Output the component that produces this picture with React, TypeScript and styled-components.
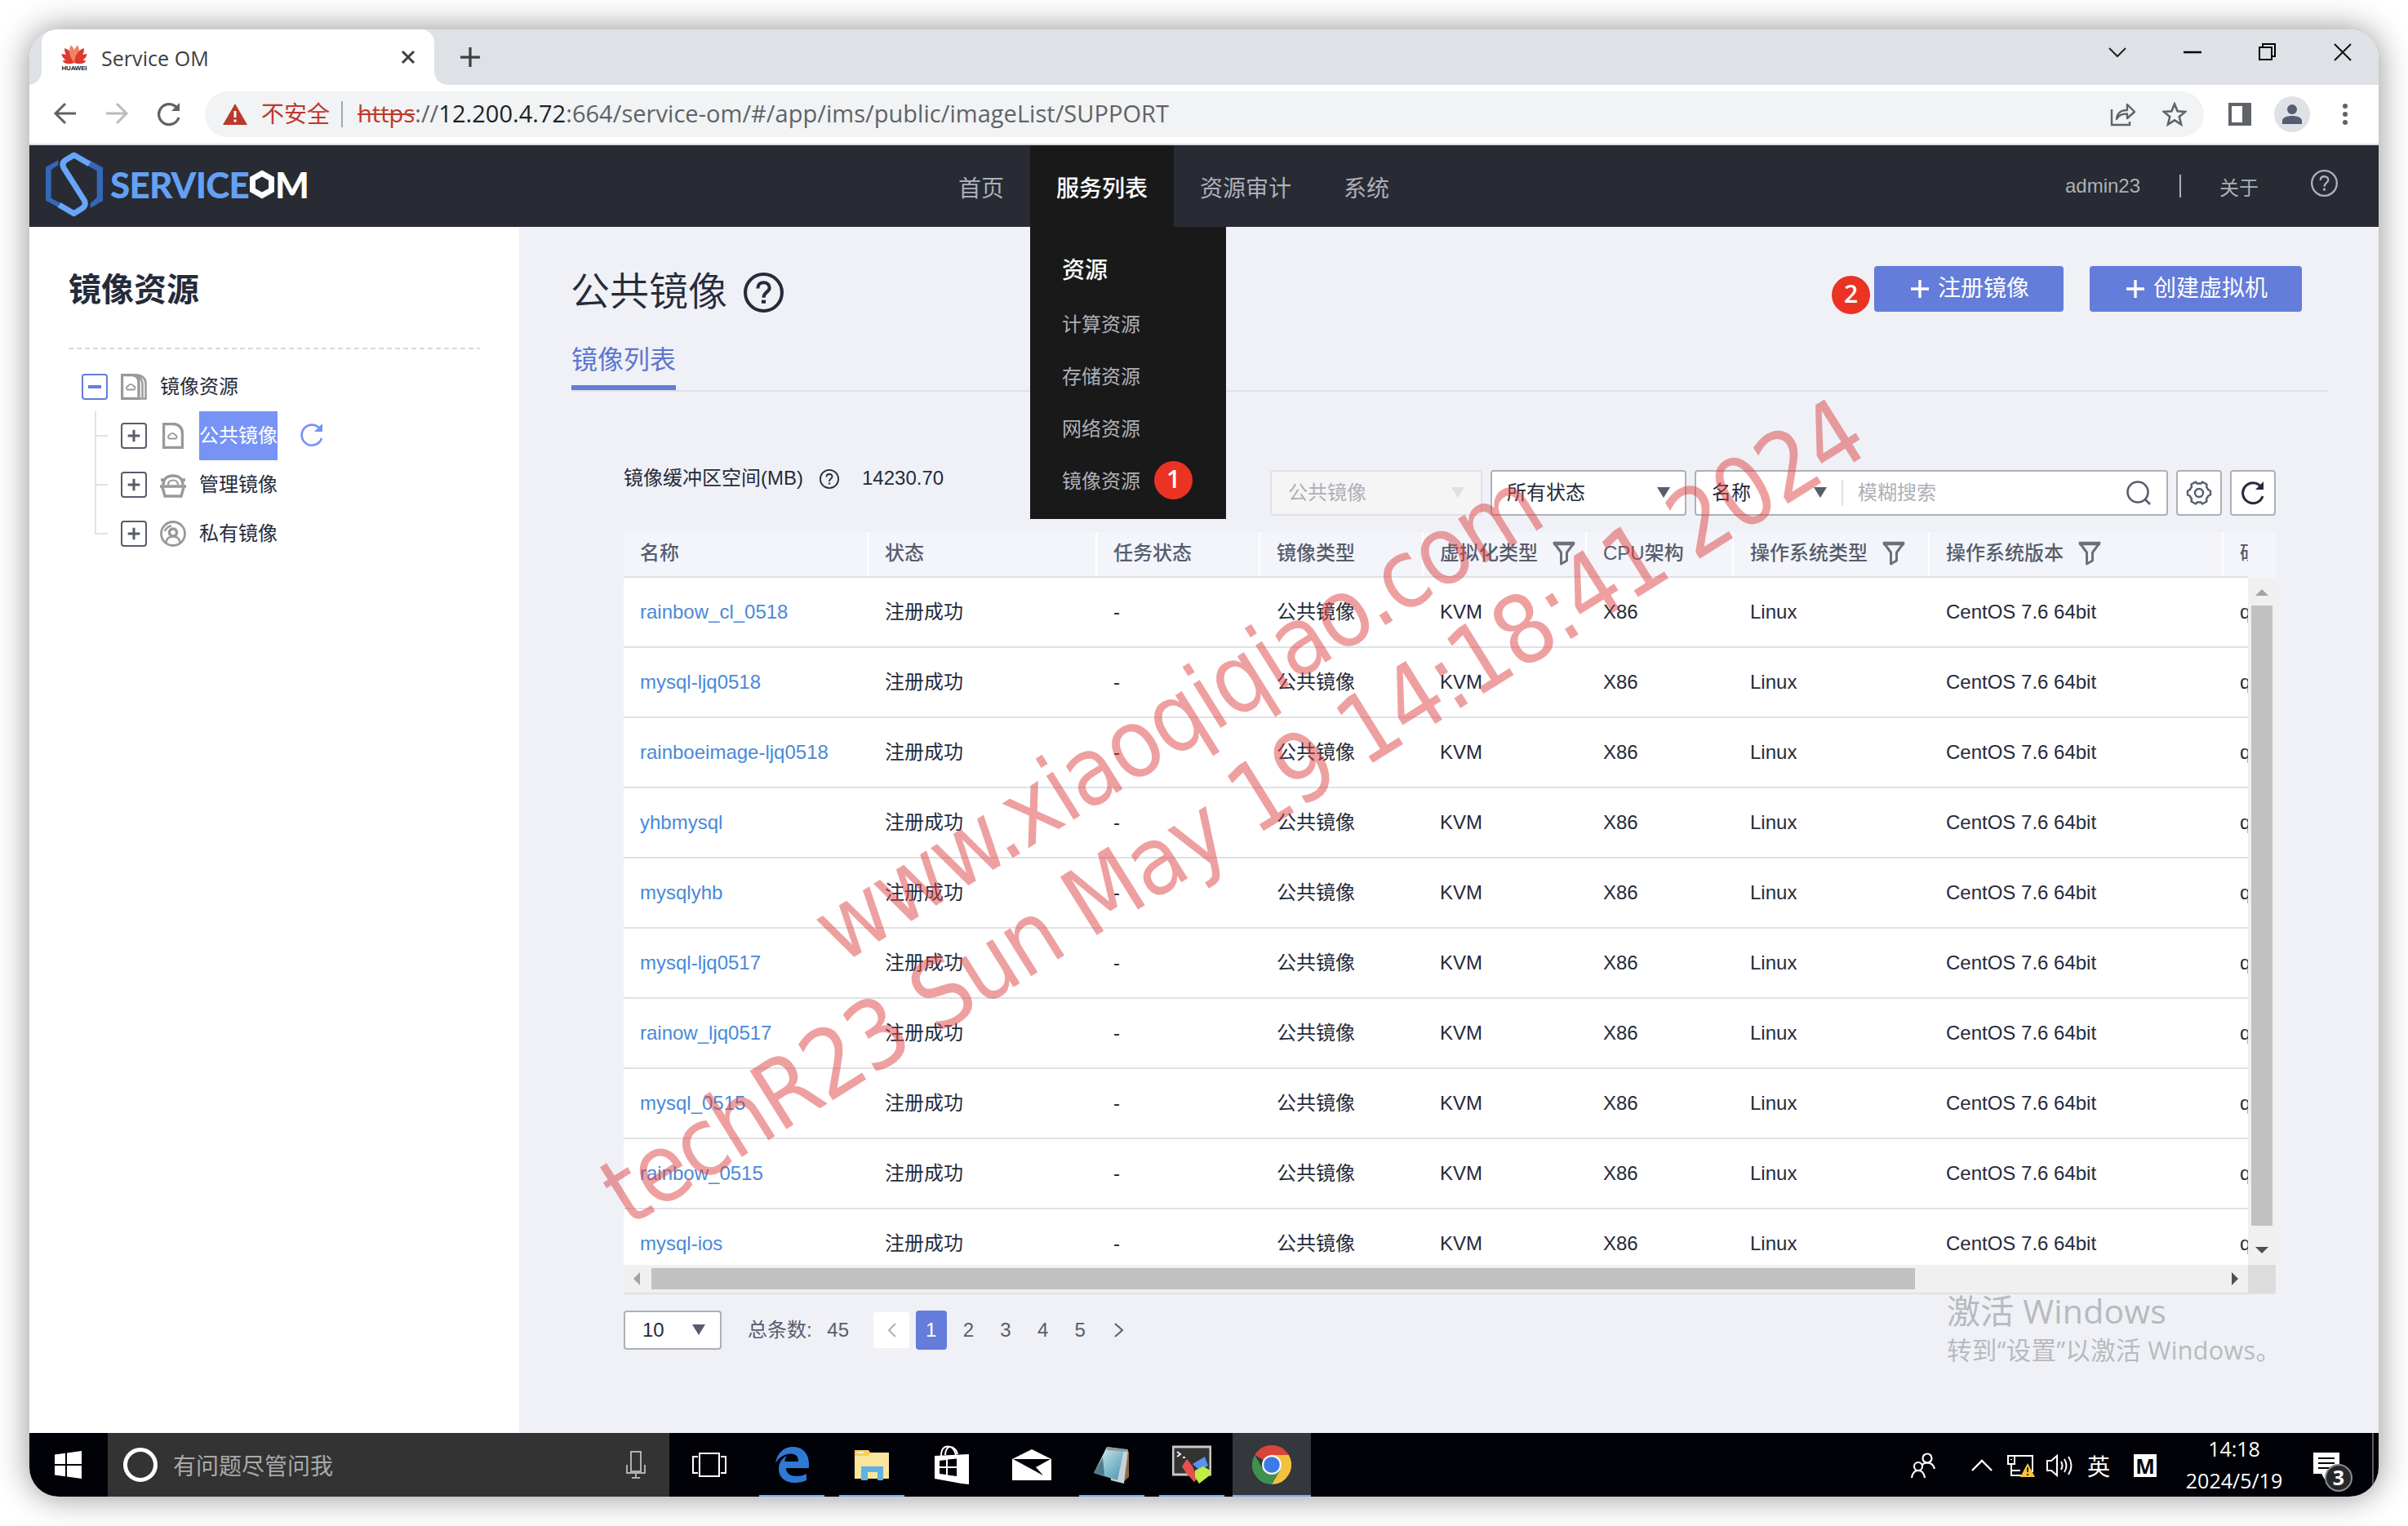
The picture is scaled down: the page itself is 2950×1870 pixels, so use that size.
import React from "react";
import styled, { createGlobalStyle, css } from "styled-components";

const SEGOE = `"Open Sans", "Noto Sans", "Noto Sans CJK SC", sans-serif`;
const ARIAL = `"Liberation Sans", "Noto Sans CJK SC", sans-serif`;
const BLUE = "#647cda";

const Global = createGlobalStyle`
  * { box-sizing: border-box; }
  html, body { margin: 0; padding: 0; background: #fff; }
  svg { display: block; flex: none; }
`;

const Page = styled.div`
  width: 2950px;
  height: 1870px;
  padding: 36px;
  overflow: hidden;
  background: #fff;
  font-family: ${ARIAL};
  font-size: 24px;
  color: #252b3a;
`;

const Desktop = styled.div`
  position: relative;
  width: 2878px;
  height: 1798px;
  display: flex;
  flex-direction: column;
  overflow: hidden;
  border-radius: 36px;
`;

const Shadow = styled.div`
  border-radius: 36px;
  box-shadow: 0 0 40px rgba(0, 0, 0, 0.44);
`;

/* ---------- browser chrome ---------- */

const TabStrip = styled.div`
  height: 68px;
  flex: none;
  display: flex;
  align-items: stretch;
  background: #dee1e6;
  padding-left: 15px;
`;

const Tab = styled.div`
  position: relative;
  width: 481px;
  display: flex;
  align-items: center;
  padding: 0 23px 0 24px;
  background: #fff;
  border-radius: 16px 16px 0 0;
  font-family: ${SEGOE};
  font-size: 25px;
  color: #3c4043;
  &::before,
  &::after {
    content: "";
    position: absolute;
    bottom: 0;
    width: 16px;
    height: 16px;
  }
  &::before {
    left: -16px;
    background: radial-gradient(circle at 0 0, transparent 15.5px, #fff 16px);
  }
  &::after {
    right: -16px;
    background: radial-gradient(circle at 100% 0, transparent 15.5px, #fff 16px);
  }
`;

const TabTitle = styled.span`
  margin-left: 17px;
  flex: 1;
  line-height: 34px;
  padding-top: 1px;
  letter-spacing: 0.05px;
`;

const NewTab = styled.div`
  display: flex;
  align-items: center;
  margin-left: 31px;
`;

const WindowButtons = styled.div`
  margin-left: auto;
  margin-right: -2px;
  display: grid;
  grid-template-columns: repeat(4, 92px);
  justify-items: center;
  align-items: center;
  height: 56px;
`;

const Toolbar = styled.div`
  height: 74px;
  flex: none;
  display: flex;
  align-items: center;
  background: #fff;
  border-bottom: 2px solid #d9dcdf;
  padding: 0 0 0 28px;
`;

const NavIcons = styled.div`
  display: flex;
  gap: 32px;
  width: 187px;
`;

const Omnibox = styled.div`
  width: 2449px;
  height: 56px;
  border-radius: 28px;
  background: #f1f3f4;
  display: flex;
  align-items: center;
  padding: 0 21px 0 21px;
  font-family: ${SEGOE};
  font-size: 28px;
  color: #5f6368;
`;

const Insecure = styled.span`
  margin: -1px 0 0 16px;
  color: #c0392b;
  line-height: 39px;
`;

const OmniDivider = styled.span`
  width: 2px;
  height: 32px;
  margin: 0 18px 0 14px;
  background: #a3a7ab;
`;

const Url = styled.span`
  flex: 1;
  line-height: 40px;
  margin-top: -2px;
  font-size: 29px;
  letter-spacing: 0.04px;
  s { color: #c0392b; text-decoration-thickness: 2px; }
  b { font-weight: 400; color: #202124; }
`;

const OmniActions = styled.div`
  display: flex;
  align-items: center;
  gap: 32px;
`;

const ToolbarEnd = styled.div`
  display: flex;
  align-items: center;
  gap: 28px;
  margin-left: 30px;
`;

const Avatar = styled.div`
  width: 44px;
  height: 44px;
  border-radius: 50%;
  background: #dee1e6;
  display: grid;
  place-items: center;
`;

/* ---------- application header ---------- */

const Header = styled.header`
  height: 100px;
  flex: none;
  display: flex;
  background: #282b33;
  color: #adb0b8;
`;

const Brand = styled.div`
  width: 1106px;
  display: flex;
  align-items: center;
  padding: 0 0 4px 20px;
`;

const BrandText = styled.span<{ $light?: boolean }>`
  font-family: Lato, sans-serif;
  font-weight: 900;
  font-size: 44px;
  line-height: 50px;
  letter-spacing: ${(p) => (p.$light ? "0" : "-0.8px")};
  color: ${(p) => (p.$light ? "#fff" : "#64a0f4")};
  margin-left: ${(p) => (p.$light ? "0" : "9px")};
`;

const Menu = styled.nav`
  display: flex;
`;

const MenuItem = styled.div<{ $active?: boolean }>`
  position: relative;
  display: flex;
  align-items: center;
  padding: 2px 32px 0;
  font-size: 28px;
  ${(p) => p.$active && css`
    background: #191919;
    color: #fff;
    font-weight: 500;
  `}
`;

const Dropdown = styled.div`
  position: absolute;
  z-index: 5;
  top: 100px;
  left: 0;
  width: 240px;
  height: 358px;
  padding: 20px 0 0 39px;
  background: #191919;
  display: flex;
  flex-direction: column;
`;

const DropTitle = styled.div`
  height: 68px;
  line-height: 67px;
  font-size: 28px;
  font-weight: 500;
  color: #fff;
`;

const DropItem = styled.div`
  height: 64px;
  display: flex;
  align-items: center;
  gap: 17px;
  font-size: 24px;
  font-weight: 400;
  color: #adb0b8;
  line-height: 62px;
`;

const StepBadge = styled.span`
  width: 47px;
  height: 47px;
  flex: none;
  border-radius: 50%;
  background: #ea3323;
  color: #fff;
  font-family: ${SEGOE};
  font-weight: 600;
  font-size: 30px;
  line-height: 44px;
  text-align: center;
  ${DropItem} & { margin-top: -3px; }
`;

const UserBar = styled.div`
  margin-left: auto;
  display: flex;
  align-items: center;
  padding-right: 50px;
  font-size: 24px;
`;

const UserDivider = styled.span`
  width: 2px;
  height: 28px;
  margin: 0 47px 0 48px;
  background: #adb0b8;
`;

const HelpSlot = styled.span`
  margin: -8px 0 0 64px;
`;

/* ---------- sidebar ---------- */

const Body = styled.div`
  height: 1478px;
  flex: none;
  display: flex;
`;

const Sidebar = styled.aside`
  width: 600px;
  background: #fff;
  padding: 0 48px;
`;

const SideTitle = styled.h2`
  margin: 0;
  height: 148px;
  line-height: 154px;
  font-size: 40px;
  font-weight: 700;
`;

const Dashes = styled.div`
  height: 2px;
  background: repeating-linear-gradient(90deg, #d3d6e2 0 6px, transparent 6px 10px);
`;

const Tree = styled.div`
  padding: 16px 0 0 16px;
`;

const TreeRow = styled.div`
  height: 60px;
  display: flex;
  align-items: center;
`;

const Branch = styled.div`
  margin-left: 16px;
`;

const ChildRow = styled(TreeRow)<{ $last?: boolean }>`
  background:
    linear-gradient(#dfe1e6, #dfe1e6) 0 29px / 16px 2px no-repeat,
    linear-gradient(#dfe1e6, #dfe1e6) 0 0 / 2px ${(p) => (p.$last ? "30px" : "60px")} no-repeat;
  padding-left: 32px;
`;

const Toggle = styled.span<{ $open?: boolean }>`
  width: 32px;
  height: 32px;
  flex: none;
  border: 2px solid ${(p) => (p.$open ? BLUE : "#575d6c")};
  border-radius: 4px;
  display: grid;
  place-items: center;
`;

const TreeIcon = styled.span`
  width: 32px;
  margin: 0 16px;
  display: flex;
  justify-content: center;
`;

const TreeLabel = styled.span<{ $selected?: boolean }>`
  line-height: 60px;
  ${(p) => p.$selected && css`
    background: #7693f5;
    color: #fff;
    margin-right: 27px;
  `}
`;

const ReloadSlot = styled.span`
  margin-top: -3px;
`;

/* ---------- main area ---------- */

const Main = styled.main`
  width: 2278px;
  background: #eff1f6;
`;

const PageHead = styled.div`
  display: flex;
  align-items: flex-start;
  padding: 48px 94px 26px 64px;
  height: 138px;
`;

const Title = styled.h1`
  margin: 0;
  height: 64px;
  display: flex;
  align-items: center;
  gap: 20px;
  font-size: 48px;
  line-height: 62px;
  font-weight: 350;
  span { margin: 0 0 0 -1px; }
`;

const Actions = styled.div`
  margin-left: auto;
  display: flex;
  gap: 32px;
  ${StepBadge} { margin: 12px -27px 0 0; }
`;

const Button = styled.button`
  height: 56px;
  padding: 0 42px 0 44px;
  border: 0;
  border-radius: 4px;
  background: ${BLUE};
  color: #fff;
  font: 28px/56px ${ARIAL};
  display: flex;
  align-items: center;
  gap: 10px;
`;

const Tabs = styled.div`
  height: 64px;
  margin: 0 62px 0 64px;
  border-bottom: 2px solid #dfe1e6;
  display: flex;
`;

const ActiveTab = styled.div`
  height: 62px;
  border-bottom: 6px solid ${BLUE};
  color: #5e76d0;
  font-size: 32px;
  line-height: 51px;
`;

const Filters = styled.div`
  display: flex;
  height: 172px;
  padding: 96px 126px 20px 128px;
`;

const CacheInfo = styled.div`
  display: flex;
  align-items: center;
  height: 20px;
  line-height: 20px;
  white-space: nowrap;
  svg { margin: 2px 28px 0 20px; }
`;

const Controls = styled.div`
  margin-left: auto;
  display: flex;
  gap: 10px;
`;

const Field = styled.div<{ $w: number; $disabled?: boolean; $pad?: number }>`
  width: ${(p) => p.$w}px;
  height: 56px;
  display: flex;
  align-items: center;
  justify-content: space-between;
  padding: 0 ${(p) => p.$pad ?? 20}px;
  border: 2px solid ${(p) => (p.$disabled ? "#dfe1e6" : "#adb0b8")};
  border-radius: 4px;
  background: ${(p) => (p.$disabled ? "#f5f5f6" : "#fff")};
  color: ${(p) => (p.$disabled ? "#adb0b8" : "#252b3a")};
  line-height: 50px;
`;

const SquareButton = styled(Field)`
  padding: 0;
  justify-content: center;
`;

const Caret = styled.span<{ $color?: string }>`
  width: 0;
  height: 0;
  border: 8px solid transparent;
  border-top: 13px solid ${(p) => p.$color ?? "#575d6c"};
  border-bottom: 0;
  margin-bottom: 1px;
`;

const SearchDivider = styled.span`
  width: 2px;
  height: 32px;
  margin: 0 18px 0 18px;
  background: #dfe1e6;
`;

const Placeholder = styled.span`
  flex: 1;
  color: #adb0b8;
`;

const Key = styled.span`
  width: 125px;
`;

const Table = styled.div`
  width: 2024px;
  margin-left: 128px;
  border-bottom: 2px solid #dfe1e6;
`;

const columns = "300px 280px 200px 200px 200px 180px 240px 360px 30px";

const HeadRow = styled.div`
  height: 56px;
  display: flex;
  background: #f3f5fb;
`;

const HeadCells = styled.div`
  display: grid;
  grid-template-columns: ${columns};
  width: 1990px;
  border-bottom: 2px solid #dfe1e6;
  color: #575d6c;
`;

const HeadCell = styled.div`
  padding-left: 20px;
  display: flex;
  align-items: center;
  gap: 18px;
  padding-bottom: 3px;
  line-height: 50px;
  white-space: nowrap;
  overflow: hidden;
  font-weight: 500;
  &:not(:last-child) {
    box-shadow: inset -2px 0 #fff;
  }
`;

const TableBody = styled.div`
  height: 842px;
  display: flex;
  background: #fff;
`;

const Rows = styled.div`
  width: 1990px;
  overflow: hidden;
`;

const Row = styled.div`
  display: grid;
  grid-template-columns: ${columns};
  height: 86px;
  line-height: 83px;
  border-bottom: 2px solid #dfe1e6;
`;

const Cell = styled.div<{ $link?: boolean }>`
  padding-left: 20px;
  overflow: hidden;
  white-space: nowrap;
  color: ${(p) => (p.$link ? "#4a89d8" : "#252b3a")};
`;

const VScroll = styled.div`
  width: 34px;
  background: #f0f0f0;
  display: flex;
  flex-direction: column;
  align-items: center;
  justify-content: space-between;
  padding: 14px 0;
`;

const VThumb = styled.div`
  width: 26px;
  height: 760px;
  margin: 0 0 14px;
  background: #c1c1c1;
`;

const HScroll = styled.div`
  height: 34px;
  display: flex;
  align-items: center;
  background: #f0f0f0;
  padding-left: 12px;
`;

const HThumb = styled.div`
  width: 1548px;
  height: 26px;
  margin: 0 388px 0 14px;
  background: #c1c1c1;
`;

const Corner = styled.div`
  width: 34px;
  height: 34px;
  margin-left: auto;
  background: #dcdcdc;
`;

const Arrow = styled.span<{ $dir: "up" | "down" | "left" | "right"; $color: string }>`
  width: 0;
  height: 0;
  flex: none;
  border: 8px solid transparent;
  ${(p) => {
    const side = { up: "bottom", down: "top", left: "right", right: "left" }[p.$dir];
    const flat = { up: "top", down: "bottom", left: "left", right: "right" }[p.$dir];
    return css`
      border-${side}-color: ${p.$color};
      border-${flat}-width: 0;
    `;
  }}
`;

const Pager = styled.div`
  display: flex;
  align-items: center;
  height: 48px;
  margin: 20px 0 0 128px;
  color: #575d6c;
  line-height: 46px;
`;

const PageSize = styled(Field)`
  height: 48px;
  color: #252b3a;
  padding-left: 21px;
`;

const Total = styled.span`
  margin: 0 30px 0 32px;
  width: 124px;
  display: flex;
  justify-content: space-between;
  white-space: nowrap;
`;

const PageBox = styled.span<{ $active?: boolean }>`
  width: 38px;
  height: 48px;
  margin: 0 3.8px;
  display: grid;
  place-items: center;
  border-radius: 4px;
  line-height: 48px;
  ${(p) => p.$active && css`
    background: ${BLUE};
    color: #fff;
  `}
`;

const PrevBox = styled(PageBox)`
  width: 44px;
  height: 44px;
  margin: 0 4px 0 0;
  background: #fff;
`;

const NextBox = styled(PageBox)`
  margin-left: 6px;
`;

/* ---------- overlays ---------- */

const Watermark = styled.div`
  position: absolute;
  z-index: 10;
  left: 736px;
  top: 1472px;
  transform-origin: 0 0;
  transform: rotate(-32deg) translateY(-112px);
  font-family: "DejaVu Sans Condensed", "DejaVu Sans", sans-serif;
  font-stretch: condensed;
  font-size: 116px;
  line-height: 135px;
  white-space: pre;
  color: rgba(221, 66, 66, 0.5);
  pointer-events: none;
`;

const MarkLine = styled.div<{ $top?: boolean }>`
  position: absolute;
  left: ${(p) => (p.$top ? "391px" : "0")};
  top: ${(p) => (p.$top ? "-135px" : "0")};
  letter-spacing: -2.7px;
`;

const Activate = styled.div`
  position: absolute;
  left: 2349px;
  top: 1540px;
  font-family: ${SEGOE};
  color: #b8babe;
  white-space: nowrap;
`;

const ActivateTitle = styled.div`
  font-size: 41px;
  line-height: 60px;
  letter-spacing: 0.2px;
`;

const ActivateHint = styled.div`
  font-size: 30.5px;
  line-height: 36px;
  letter-spacing: 0.35px;
`;

/* ---------- taskbar ---------- */

const Taskbar = styled.footer`
  height: 78px;
  flex: none;
  display: flex;
  background: #010207;
  color: #fff;
`;

const StartButton = styled.div`
  width: 96px;
  display: grid;
  place-items: center;
`;

const Cortana = styled.div`
  width: 688px;
  background: #333;
  display: flex;
  align-items: center;
  padding: 0 29px 0 18px;
  font-size: 28px;
  color: #a9a9a9;
  span { flex: 1; margin-left: 18px; padding-top: 5px; line-height: 73px; }
`;

const Apps = styled.div`
  display: flex;
  gap: 2px;
`;

const TaskButton = styled.div<{ $state?: "open" | "active" }>`
  width: 96px;
  height: 78px;
  display: grid;
  place-items: center;
  ${(p) => p.$state === "open" && css`
    background: linear-gradient(#76b0ea, #76b0ea) center bottom / 80px 2px no-repeat;
  `}
  ${(p) => p.$state === "active" && css`
    background: linear-gradient(#76b0ea, #76b0ea) center bottom / 96px 2px no-repeat, #34373c;
  `}
`;

const TaskView = styled(TaskButton)`
  width: 100px;
  padding-right: 3px;
`;

const Tray = styled.div`
  margin-left: auto;
  display: flex;
`;

const TraySlot = styled.div<{ $w: number; $gap?: number }>`
  width: ${(p) => p.$w}px;
  margin-left: ${(p) => p.$gap ?? 0}px;
  display: grid;
  place-items: center;
  padding-top: 2px;
  font-size: 28px;
`;

const InputMode = styled.span`
  width: 28px;
  height: 28px;
  background: #fff;
  color: #000;
  font: 700 25px/28px ${SEGOE};
  text-align: center;
`;

const Clock = styled.div`
  width: 166px;
  font-family: ${SEGOE};
  font-size: 25px;
  line-height: 39px;
  text-align: center;
`;

const Notice = styled.div`
  position: relative;
  width: 64px;
  padding: 24px 0 0 14px;
`;

const NoticeCount = styled.span`
  position: absolute;
  left: 28px;
  top: 38px;
  width: 34px;
  height: 34px;
  border-radius: 50%;
  border: 2px solid #8c8c8e;
  background: #26282c;
  font: 700 25px/28px ${SEGOE};
  text-align: center;
`;

const ShowDesktop = styled.div`
  width: 8px;
  margin-left: 22px;
  border-left: 2px solid #5b5c60;
`;

/* ---------- icons ---------- */

const Plus = ({ size = 24, w = 3, color = "#fff" }: { size?: number; w?: number; color?: string }) => (
  <svg width={size} height={size} viewBox="0 0 24 24" stroke={color} strokeWidth={w}>
    <path d="M12 1V23M1 12H23" />
  </svg>
);

const Help = ({ size, w = 3, color = "#252b3a" }: { size: number; w?: number; color?: string }) => (
  <svg width={size} height={size} viewBox="0 0 48 48" fill="none" stroke={color} strokeWidth={w}>
    <circle cx="24" cy="24" r={24 - w / 2} />
    <path d="M17 19C17 14.5 20 12 24 12S31 14.5 31 18.500C31 23 24 23.500 24 30" />
    <path d="M24 33V37" strokeWidth={w + 1} />
  </svg>
);

const Refresh = ({ w = 30, sw = 3, color }: { w?: number; sw?: number; color: string }) => (
  <svg width={w} height={w} viewBox="0 0 30 30" fill="none" stroke={color} strokeWidth={sw}>
    <path d="M27 19A12.500 12.500 0 1 1 25 7.500" />
    <path d="M28 1V11H18Z" fill={color} stroke="none" />
  </svg>
);

const Funnel = () => (
  <svg width="28" height="30" viewBox="0 0 28 30" fill="none" stroke="#6b707d" strokeWidth="3">
    <path d="M2 2.500H26L17.500 14V24L10.500 28V14Z" strokeLinejoin="round" />
    <path d="M1 3H27" strokeWidth="4.500" />
  </svg>
);

const Huawei = () => (
  <svg width="32" height="34" viewBox="0 0 32 34">
    {[
      [-82, 0.66], [-56, 0.86], [-33, 0.98], [-11, 1], [11, 1], [33, 0.98], [56, 0.86], [82, 0.66],
    ].map(([a, s], i) => (
      <path
        key={i}
        d="M0 0C-5 -8 -5 -17 0 -22C5 -17 5 -8 0 0Z"
        fill={i === 3 || i === 4 ? "#ee8464" : "#dd3a30"}
        transform={`translate(16 24) rotate(${a}) scale(${s * 0.9} ${s})`}
      />
    ))}
    <text x="16" y="32.500" fontFamily="Liberation Sans" fontSize="8" fontWeight="700" textAnchor="middle" textLength="31" fill="#222">HUAWEI</text>
  </svg>
);

const Doc = ({ stacked }: { stacked?: boolean }) => (
  <svg width={stacked ? 32 : 26} height="32" viewBox={stacked ? "0 0 32 32" : "0 0 26 32"} fill="none" stroke="#999" strokeWidth="3.400">
    <path d={stacked ? "M1.500 1.500H14Q22 2.500 22 10V30.500H1.500Z" : "M1.500 1.500H14Q24.500 3 24.500 13V30.500H1.500Z"} />
    {stacked && <path d="M14 1.500H20Q30.500 3 30.500 12V30.500H21M17 2Q26 4 26.500 12V29" strokeWidth="2.500" />}
    <path d="M8 19.500A2.500 2.500 0 0 1 9 15A3.500 3.500 0 0 1 15.500 15A2.500 2.500 0 0 1 16.500 19.500Z" strokeWidth="1.800" />
  </svg>
);

const Basket = () => (
  <svg width="32" height="32" viewBox="0 0 32 32" fill="none" stroke="#999" strokeWidth="3.400">
    <path d="M0 18H32M3 19L6 30H26L29 19" />
    <path d="M4 16C4 9 9 5 16 5S28 9 28 16" />
    <path d="M1 10H6M26 10H31" strokeWidth="3.500" />
    <path d="M10 16C10 12 12.500 10.500 16 10.500S22 12 22 16" strokeWidth="2.200" />
  </svg>
);

const Person = () => (
  <svg width="32" height="32" viewBox="0 0 32 32" fill="none" stroke="#999">
    <circle cx="16" cy="16" r="14.500" strokeWidth="2.800" />
    <circle cx="16" cy="14.500" r="4.500" strokeWidth="3.500" />
    <path d="M7.500 27C8 21 11.500 19.500 16 19.500S24 21 24.500 27M6 13C7.500 9 10 7 14 6.500" strokeWidth="2.500" />
  </svg>
);

const Logo = () => (
  <svg width="70" height="80" viewBox="48 48 210 240" fill="none">
    <path d="M48 104L94 79V97L68 114V218L98 235V254L48 227Z" fill="#3467b8" />
    <path d="M208 79L258 106V228L212 255V238L236 216V118L206 102Z" fill="#3467b8" />
    <path d="M209 93L152 60L122 78Q105 88 114 107L190 227Q198 246 182 256L152 275L97 243" stroke="#68a5f9" strokeWidth="21" strokeLinejoin="round" />
  </svg>
);

const HexO = () => (
  <svg width="32" height="36" viewBox="0 0 32 36" fill="none" stroke="#fff" strokeWidth="7">
    <path d="M16 4.500L27.500 11V25L16 31.500L4.500 25V11Z" />
  </svg>
);

const Gear = () => (
  <svg width="32" height="32" viewBox="0 0 32 32" fill="none" stroke="#575d6c" strokeWidth="2.400" strokeLinejoin="round">
    <path d="M12 2.500L13.500 4.500H18.500L20 2.500L25.500 5.500L25 8.500L27.500 12.500L30 13.500V18.500L27.500 19.500L25 23.500L25.500 26.500L20 29.500L18.500 27.500H13.500L12 29.500L6.500 26.500L7 23.500L4.500 19.500L2 18.500V13.500L4.500 12.500L7 8.500L6.500 5.500Z" />
    <circle cx="16" cy="16" r="5" />
  </svg>
);

const Edge = () => (
  <svg width="42" height="44" viewBox="0 0 42 44">
    <path d="M1 20C3 7 12 0 22 0C35 0 42 9 42 21V26H14C14 33 20 36 27 36C32 36 36 35 39 33V41C35 43 30 44 25 44C12 44 5 37 5 27C5 20 9 14 15 11C13 13 12.500 16 12.500 18H29C29 12 26 8.500 20 8.500C12 8.500 5 13 1 20Z" fill="#2f78d4" />
  </svg>
);

const Folder = () => (
  <svg width="44" height="38" viewBox="0 0 44 38">
    <path d="M1 1H18L20 4H43V36H1Z" fill="#f6cf5a" />
    <path d="M1 8H18L21 4H43V36H1Z" fill="#fce69c" />
    <path d="M9 38V21H36V38H29V28H17V38Z" fill="#5fb2e3" />
    <path d="M4 3H12V5H4Z" fill="#e9f4f4" />
  </svg>
);

const Store = () => (
  <svg width="44" height="48" viewBox="0 0 44 48">
    <path d="M1 13L43 11V48L34 47L1 41Z" fill="#fff" />
    <path d="M9 13C9 5 12 1.500 17 1.500S25 4 27 12M14 12C14 6 17 2 20 2S28 5 29 11" fill="none" stroke="#fff" strokeWidth="2" />
    <path d="M7 19L15 18V26H7ZM17 17.500L28 16.500V26H17ZM7 28H15V36L7 35ZM17 28H28V38L17 36.500Z" fill="#010207" />
  </svg>
);

const Mail = () => (
  <svg width="48" height="38" viewBox="0 0 48 38">
    <path d="M0 12L24 0L48 12V38H0Z" fill="#fff" />
    <path d="M1 12H47L29 22L38 32Z" fill="#010207" />
  </svg>
);

const Notepad = () => (
  <svg width="46" height="46" viewBox="0 0 46 46">
    <defs>
      <linearGradient id="np" x1="0" y1="0" x2="1" y2="1">
        <stop offset="0" stopColor="#e6f4f7" />
        <stop offset=".6" stopColor="#7fb9cb" />
        <stop offset="1" stopColor="#4f93a8" />
      </linearGradient>
    </defs>
    <path d="M34 4L44 7V38L36 45Z" fill="#8b6a42" />
    <path d="M18 2L43 5L38 46L22 42Z" fill="#c5d3dc" />
    <path d="M17 1L38 4L30 42L1 33Z" fill="url(#np)" />
    <path d="M1 33L12 14L14 36Z" fill="#2b5c6b" opacity=".7" />
    <path d="M17 1L43 4V7L17 5Z" fill="#8d979c" />
  </svg>
);

const Moba = () => (
  <svg width="48" height="48" viewBox="0 0 48 48">
    <path d="M1 2H47V36H1Z" fill="#333" stroke="#c9c9c9" strokeWidth="3" />
    <path d="M6 8L10 11L6 14M13 15H16" fill="none" stroke="#eee" strokeWidth="2" />
    <path d="M12 26L18 17L25 26L31 41L27 45L17 34Z" fill="#e4524e" />
    <path d="M25 23L40 14L44 25L34 31Z" fill="#5b92ee" />
    <path d="M28 31L38 26L47 31L46 37L33 47L28 39Z" fill="#bdf03f" />
  </svg>
);

const Chrome = () => (
  <svg width="48" height="48" viewBox="0 0 48 48">
    <path d="M24 24L3.200 12A24 24 0 0 1 44.800 12Z" fill="#d9453a" />
    <path d="M24 12H44.800A24 24 0 0 1 24 48L34.400 30Z" fill="#f2c13e" />
    <path d="M24 48A24 24 0 0 1 3.200 12L13.600 30L24 36L34.400 30Z" fill="#3f9150" />
    <circle cx="24" cy="24" r="12" fill="#f4f7f4" />
    <circle cx="24" cy="24" r="9.800" fill="#3f79e8" />
  </svg>
);

const iconLine = (w: number, h: number, d: string, color = "#5f6368", sw = 3, fill = "none") => (
  <svg width={w} height={h} viewBox={`0 0 ${w} ${h}`} fill={fill} stroke={color} strokeWidth={sw}>
    <path d={d} />
  </svg>
);

/* ---------- data ---------- */

const names = [
  "rainbow_cl_0518", "mysql-ljq0518", "rainboeimage-ljq0518", "yhbmysql", "mysqlyhb",
  "mysql-ljq0517", "rainow_ljq0517", "mysql_0515", "rainbow_0515", "mysql-ios",
];

const heads: [string, boolean?][] = [
  ["名称"], ["状态"], ["任务状态"], ["镜像类型"], ["虚拟化类型", true], ["CPU架构"],
  ["操作系统类型", true], ["操作系统版本", true], ["硬"],
];

const BrowserChrome = () => (
  <>
    <TabStrip>
      <Tab>
        <Huawei />
        <TabTitle>Service OM</TabTitle>
        {iconLine(18, 18, "M2 2L16 16M16 2L2 16", "#3c4043")}
      </Tab>
      <NewTab><Plus size={26} w={3} color="#3c4043" /></NewTab>
      <WindowButtons>
        {iconLine(22, 14, "M1 2L11 12L21 2", "#222", 2)}
        {iconLine(22, 4, "M0 2H22", "#000", 2.5)}
        {iconLine(22, 22, "M1 5H16V20H1ZM5 5V1H20V16H16", "#000", 2)}
        {iconLine(22, 22, "M1 1L21 21M21 1L1 21", "#111", 2)}
      </WindowButtons>
    </TabStrip>
    <Toolbar>
      <NavIcons>
        {iconLine(32, 28, "M29 14H4M16 2L4 14L16 26")}
        {iconLine(32, 28, "M2 14H27M15 2L27 14L15 26", "#b9bbbe")}
        <Refresh w={30} sw={3.2} color="#5f6368" />
      </NavIcons>
      <Omnibox>
        <svg width="32" height="28" viewBox="0 0 32 28">
          <path d="M16 1L31 27H1Z" fill="#b93a2b" />
          <path d="M16 10V18M16 20.500V23.500" stroke="#fff" strokeWidth="3" />
        </svg>
        <Insecure>不安全</Insecure>
        <OmniDivider />
        <Url><s>https</s>://<b>12.200.4.72</b>:664/service-om/#/app/ims/public/imageList/SUPPORT</Url>
        <OmniActions>
          <svg width="32" height="30" viewBox="0 0 32 30" fill="none" stroke="#5f6368" strokeWidth="2.400">
            <path d="M2 9V28H24V24" />
            <path d="M8 21C9 13 13 10 21 10V3L30 12L21 20V14.500C14 14.500 11 16 8 21Z" strokeLinejoin="round" />
          </svg>
          <svg width="30" height="30" viewBox="0 0 30 30" fill="none" stroke="#5f6368" strokeWidth="2.600">
            <path d="M15 2.500L18.600 11.300L28 12L20.800 18L23.100 27.500L15 22.300L6.900 27.500L9.200 18L2 12L11.400 11.300Z" />
          </svg>
        </OmniActions>
      </Omnibox>
      <ToolbarEnd>
        <svg width="28" height="28" viewBox="0 0 28 28">
          <path d="M0 0H28V28H0ZM4 4V24H17V4Z" fill="#5f6368" fillRule="evenodd" />
        </svg>
        <Avatar>
          <svg width="26" height="26" viewBox="0 0 26 26" fill="#555d70">
            <circle cx="13" cy="7" r="6" />
            <path d="M1 25V21C1 17 7 15 13 15S25 17 25 21V25Z" />
          </svg>
        </Avatar>
        <svg width="44" height="28" viewBox="0 0 44 28" fill="#5f6368">
          <circle cx="15" cy="4" r="3" /><circle cx="15" cy="14" r="3" /><circle cx="15" cy="24" r="3" />
        </svg>
      </ToolbarEnd>
    </Toolbar>
  </>
);

const AppHeader = () => (
  <Header>
    <Brand>
      <Logo />
      <BrandText>SERVICE</BrandText>
      <HexO />
      <BrandText $light>M</BrandText>
    </Brand>
    <Menu>
      <MenuItem>首页</MenuItem>
      <MenuItem $active>
        服务列表
        <Dropdown>
          <DropTitle>资源</DropTitle>
          <DropItem>计算资源</DropItem>
          <DropItem>存储资源</DropItem>
          <DropItem>网络资源</DropItem>
          <DropItem>镜像资源<StepBadge>1</StepBadge></DropItem>
        </Dropdown>
      </MenuItem>
      <MenuItem>资源审计</MenuItem>
      <MenuItem>系统</MenuItem>
    </Menu>
    <UserBar>
      <span>admin23</span>
      <UserDivider />
      <span>关于</span>
      <HelpSlot><Help size={33} w={3.4} color="#adb0b8" /></HelpSlot>
    </UserBar>
  </Header>
);

const plusGlyph = <Plus size={16} w={4.5} color="#575d6c" />;

const Side = () => (
  <Sidebar>
    <SideTitle>镜像资源</SideTitle>
    <Dashes />
    <Tree>
      <TreeRow>
        <Toggle $open>{iconLine(16, 4, "M0 2H16", BLUE, 4)}</Toggle>
        <TreeIcon><Doc stacked /></TreeIcon>
        <TreeLabel>镜像资源</TreeLabel>
      </TreeRow>
      <Branch>
        <ChildRow>
          <Toggle>{plusGlyph}</Toggle>
          <TreeIcon><Doc /></TreeIcon>
          <TreeLabel $selected>公共镜像</TreeLabel>
          <ReloadSlot><Refresh w={30} sw={2.6} color="#7693f5" /></ReloadSlot>
        </ChildRow>
        <ChildRow>
          <Toggle>{plusGlyph}</Toggle>
          <TreeIcon><Basket /></TreeIcon>
          <TreeLabel>管理镜像</TreeLabel>
        </ChildRow>
        <ChildRow $last>
          <Toggle>{plusGlyph}</Toggle>
          <TreeIcon><Person /></TreeIcon>
          <TreeLabel>私有镜像</TreeLabel>
        </ChildRow>
      </Branch>
    </Tree>
  </Sidebar>
);

const ImageTable = () => (
  <Table>
    <HeadRow>
      <HeadCells>
        {heads.map(([label, filter]) => (
          <HeadCell key={label}>{label}{filter && <Funnel />}</HeadCell>
        ))}
      </HeadCells>
    </HeadRow>
    <TableBody>
      <Rows>
        {names.map((name) => (
          <Row key={name}>
            <Cell $link>{name}</Cell>
            <Cell>注册成功</Cell>
            <Cell>-</Cell>
            <Cell>公共镜像</Cell>
            <Cell>KVM</Cell>
            <Cell>X86</Cell>
            <Cell>Linux</Cell>
            <Cell>CentOS 7.6 64bit</Cell>
            <Cell>q</Cell>
          </Row>
        ))}
      </Rows>
      <VScroll>
        <Arrow $dir="up" $color="#a3a3a3" />
        <VThumb />
        <Arrow $dir="down" $color="#505050" />
      </VScroll>
    </TableBody>
    <HScroll>
      <Arrow $dir="left" $color="#a3a3a3" />
      <HThumb />
      <Arrow $dir="right" $color="#505050" />
      <Corner />
    </HScroll>
  </Table>
);

const Content = () => (
  <Main>
    <PageHead>
      <Title><span>公共镜像</span><Help size={49} w={4} /></Title>
      <Actions>
        <StepBadge>2</StepBadge>
        <Button><Plus w={3.4} />注册镜像</Button>
        <Button><Plus w={3.4} />创建虚拟机</Button>
      </Actions>
    </PageHead>
    <Tabs><ActiveTab>镜像列表</ActiveTab></Tabs>
    <Filters>
      <CacheInfo>镜像缓冲区空间(MB)<Help size={24} w={3.6} />14230.70</CacheInfo>
      <Controls>
        <Field $w={260} $disabled>公共镜像<Caret $color="#dfe1e6" /></Field>
        <Field $w={240} $pad={18}>所有状态<Caret /></Field>
        <Field $w={580} $pad={19}>
          <Key>名称</Key>
          <Caret />
          <SearchDivider />
          <Placeholder>模糊搜索</Placeholder>
          <svg width="32" height="32" viewBox="0 0 32 32" fill="none" stroke="#575d6c" strokeWidth="2.600">
            <circle cx="16" cy="15" r="12.500" /><path d="M25 24L31 30" />
          </svg>
        </Field>
        <SquareButton $w={56}><Gear /></SquareButton>
        <SquareButton $w={56}><Refresh w={30} color="#252b3a" /></SquareButton>
      </Controls>
    </Filters>
    <ImageTable />
    <Pager>
      <PageSize $w={120} $pad={18}>10<Caret /></PageSize>
      <Total><span>总条数:</span><span>45</span></Total>
      <PrevBox>{iconLine(12, 18, "M11 1L3 9L11 17", "#adb0b8", 2)}</PrevBox>
      <PageBox $active>1</PageBox>
      {["2", "3", "4", "5"].map((n) => <PageBox key={n}>{n}</PageBox>)}
      <NextBox>{iconLine(12, 18, "M1 1L10 9L1 17", "#575d6c", 2)}</NextBox>
    </Pager>
  </Main>
);

const Bar = () => (
  <Taskbar>
    <StartButton>
      <svg width="34" height="34" viewBox="0 0 34 34" fill="#fff">
        <path d="M0 4.500L13 2.700V16H0ZM15 2.400L33 0V16H15ZM0 18H13V31.300L0 29.500ZM15 18H33V34L15 31.600Z" />
      </svg>
    </StartButton>
    <Cortana>
      <svg width="44" height="44" viewBox="0 0 44 44"><circle cx="22" cy="22" r="18.500" fill="none" stroke="#fff" strokeWidth="5" /></svg>
      <span>有问题尽管问我</span>
      {iconLine(24, 34, "M6 1H18V25H6ZM1 17V27H23V17M12 27V32M7 33H17", "#b0b0b0", 2)}
    </Cortana>
    <Apps>
      <TaskView>{iconLine(42, 30, "M9 1H33V29H9ZM7 5H1V25H7M35 5H41V25H35", "#fff", 2)}</TaskView>
      <TaskButton $state="open"><Edge /></TaskButton>
      <TaskButton $state="open"><Folder /></TaskButton>
      <TaskButton><Store /></TaskButton>
      <TaskButton><Mail /></TaskButton>
      <TaskButton $state="open"><Notepad /></TaskButton>
      <TaskButton $state="open"><Moba /></TaskButton>
      <TaskButton $state="active"><Chrome /></TaskButton>
    </Apps>
    <Tray>
      <TraySlot $w={48}>
        <svg width="32" height="32" viewBox="0 0 32 32" fill="none" stroke="#fff" strokeWidth="2.200">
          <circle cx="21" cy="7" r="5.500" /><circle cx="10" cy="17" r="5" />
          <path d="M15 15C17 12.500 19 12.500 21 12.500C26 12.500 29 16 30 20M2 31C3 25 6 22 10 22S17 25 18 31" />
        </svg>
      </TraySlot>
      <TraySlot $w={48} $gap={24}>{iconLine(26, 16, "M1 14L13 2L25 14", "#fff", 2.4)}</TraySlot>
      <TraySlot $w={48}>
        <svg width="34" height="30" viewBox="0 0 34 30" fill="none" stroke="#fff" strokeWidth="2">
          <path d="M9 3H31V23M1 3H9V13H1ZM5 7V8M5 13V27H17M5 21H16" />
          <path d="M25 12L34 29H16Z" fill="#f8c341" stroke="none" />
          <path d="M25 17V23M25 25V27" stroke="#3a2d00" />
        </svg>
      </TraySlot>
      <TraySlot $w={48}>{iconLine(34, 30, "M1 9H6L13 3V27L6 21H1ZM18 10Q21 15 18 20M22 7Q27 15 22 23M27 4Q34 15 27 26", "#fff", 2)}</TraySlot>
      <TraySlot $w={46}>英</TraySlot>
      <TraySlot $w={52} $gap={8}><InputMode>M</InputMode></TraySlot>
      <Clock>14:18<br />2024/5/19</Clock>
      <Notice>
        <svg width="32" height="34" viewBox="0 0 32 34">
          <path d="M0 0H32V26H18L14 33L10 26H0Z" fill="#fff" />
          <path d="M6 7H26M6 13H26M6 19H20" stroke="#010207" strokeWidth="2" />
        </svg>
        <NoticeCount>3</NoticeCount>
      </Notice>
      <ShowDesktop />
    </Tray>
  </Taskbar>
);

export default function App() {
  return (
    <Page>
      <Global />
      <Shadow>
        <Desktop>
          <BrowserChrome />
          <AppHeader />
          <Body>
            <Side />
            <Content />
          </Body>
          <Bar />
          <Activate>
            <ActivateTitle>激活 Windows</ActivateTitle>
            <ActivateHint>转到“设置”以激活 Windows。</ActivateHint>
          </Activate>
          <Watermark>
            <MarkLine $top>www.xiaoqiqiao.com</MarkLine>
            <MarkLine>techR23 Sun May 19 14:18:41 2024</MarkLine>
          </Watermark>
        </Desktop>
      </Shadow>
    </Page>
  );
}
